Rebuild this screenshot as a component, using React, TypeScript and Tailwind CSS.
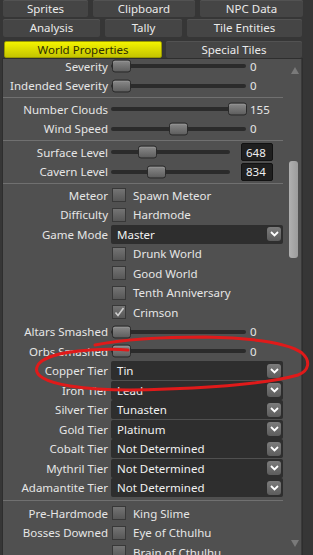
import React from "react";

const ROW = "flex items-center h-[19.5px] shrink-0";

function Label({ children }: { children?: React.ReactNode }) {
  return (
    <div className="w-[105px] shrink-0 text-right text-[#e6e6e6] whitespace-nowrap leading-none">
      {children}
    </div>
  );
}

function Thumb({ pos }: { pos: string }) {
  return (
    <div
      className={`absolute top-1/2 -translate-y-1/2 ${pos} w-[19px] h-[13px] rounded-[3px] border border-[#2a2a2a] bg-gradient-to-b from-[#8a8a8a] to-[#5e5e5e] shadow-[inset_0_1px_0_#9a9a9a]`}
    />
  );
}

function SliderRow({
  label,
  pos,
  value,
}: {
  label: string;
  pos: string;
  value: string;
}) {
  return (
    <div className={ROW}>
      <Label>{label}</Label>
      <div className="relative ml-[3px] w-[135px] h-full">
        <div className="absolute left-0 right-0 top-1/2 -translate-y-1/2 h-[4px] rounded-full bg-[#2b2b2b]" />
        <Thumb pos={pos} />
      </div>
      <div className="ml-[4px] text-[#e6e6e6] leading-none">{value}</div>
    </div>
  );
}

function LevelRow({
  label,
  pos,
  value,
}: {
  label: string;
  pos: string;
  value: string;
}) {
  return (
    <div className={ROW}>
      <Label>{label}</Label>
      <div className="relative ml-[3px] w-[119px] h-full">
        <div className="absolute left-0 right-0 top-1/2 -translate-y-1/2 h-[4px] rounded-full bg-[#2b2b2b]" />
        <Thumb pos={pos} />
      </div>
      <div className="ml-[11px] w-[32px] h-[18px] bg-[#1f1f1f] border border-[#121212] rounded-[2px] flex items-center pl-[4px] text-[#f0f0f0] leading-none">
        {value}
      </div>
    </div>
  );
}

function Box({ checked }: { checked?: boolean }) {
  return (
    <div className="ml-[4px] w-[14px] h-[14px] border border-[#383838] bg-gradient-to-b from-[#747474] to-[#575757] flex items-center justify-center shrink-0">
      {checked && (
        <svg width="11" height="10" viewBox="0 0 11 10">
          <path d="M1.5 5.5 L4 8.5 L9.5 1" fill="none" stroke="#cfcfcf" strokeWidth="1.6" />
        </svg>
      )}
    </div>
  );
}

function CheckRow({
  label,
  text,
  checked,
}: {
  label?: string;
  text: string;
  checked?: boolean;
}) {
  return (
    <div className={ROW}>
      <Label>{label}</Label>
      <Box checked={checked} />
      <div className="ml-[7px] text-[#e6e6e6] leading-none whitespace-nowrap">{text}</div>
    </div>
  );
}

function Select({ label, value }: { label: string; value: string }) {
  return (
    <div className={ROW}>
      <Label>{label}</Label>
      <div className="ml-[3px] w-[172px] h-[19px] bg-[#2e2e2e] rounded-[2px] flex items-center pl-[6px] pr-[2px]">
        <div className="flex-1 text-[#f2f2f2] leading-none whitespace-nowrap">{value}</div>
        <div className="w-[14px] h-[14px] rounded-[3px] bg-gradient-to-b from-[#7c7c7c] to-[#5c5c5c] flex items-center justify-center">
          <svg width="9" height="6" viewBox="0 0 9 6">
            <path d="M1 1 L4.5 4.5 L8 1" fill="none" stroke="#ffffff" strokeWidth="1.8" />
          </svg>
        </div>
      </div>
    </div>
  );
}

function Sep({ h }: { h: string }) {
  return (
    <div className={`flex items-center ${h} shrink-0`}>
      <div className="w-[280px] h-[1px] bg-[#707070]" />
    </div>
  );
}

function Tab({
  w,
  children,
  active,
  h,
}: {
  w: string;
  children: React.ReactNode;
  active?: boolean;
  h: string;
}) {
  return (
    <div
      className={`${w} ${h} shrink-0 rounded-[2px] flex items-center justify-center leading-none whitespace-nowrap ${
        active
          ? "bg-gradient-to-b from-[#f4f400] to-[#c4c400] text-[#2e2e00] border border-[#9a9a00]"
          : "bg-[#454545] text-[#eaeaea] shadow-[inset_0_1px_0_#525252]"
      }`}
    >
      {children}
    </div>
  );
}

export default function App() {
  return (
    <div className="relative w-[313px] h-[555px] overflow-hidden bg-[#363636] text-[11.5px] font-['Noto_Sans','Open_Sans',sans-serif]">
      {/* tabs */}
      <div className="flex flex-col">
        <div className="flex pl-[3px] gap-[5px] h-[17px] items-end">
          <Tab w="w-[85px]" h="h-[17px]">Sprites</Tab>
          <Tab w="w-[102px]" h="h-[17px]">Clipboard</Tab>
          <Tab w="w-[103px]" h="h-[17px]">NPC Data</Tab>
        </div>
        <div className="flex pl-[3px] gap-[5px] mt-[2px] h-[18px]">
          <Tab w="w-[97px]" h="h-[18px]">Analysis</Tab>
          <Tab w="w-[77px]" h="h-[18px]">Tally</Tab>
          <Tab w="w-[115px]" h="h-[18px]">Tile Entities</Tab>
        </div>
        <div className="flex pl-[4px] gap-[4px] mt-[4px] h-[17px]">
          <Tab w="w-[158px]" h="h-[17px]" active>
            World Properties
          </Tab>
          <Tab w="w-[136px]" h="h-[17px]">Special Tiles</Tab>
        </div>
      </div>

      {/* panel */}
      <div className="absolute left-[2px] top-[58px] w-[301px] h-[500px] border border-[#2e2e2e] bg-[#505050] flex overflow-hidden">
        <div className="flex-1 flex flex-col -mt-[2.5px]">
          <SliderRow label="Severity" pos="left-[1px]" value="0" />
          <SliderRow label="Indended Severity" pos="left-[1px]" value="0" />
          <Sep h="h-[4px]" />
          <SliderRow label="Number Clouds" pos="left-[117px]" value="155" />
          <SliderRow label="Wind Speed" pos="left-[58px]" value="0" />
          <Sep h="h-[4px]" />
          <LevelRow label="Surface Level" pos="left-[27px]" value="648" />
          <LevelRow label="Cavern Level" pos="left-[36px]" value="834" />
          <Sep h="h-[4px]" />
          <CheckRow label="Meteor" text="Spawn Meteor" />
          <CheckRow label="Difficulty" text="Hardmode" />
          <Select label="Game Mode" value="Master" />
          <CheckRow text="Drunk World" />
          <CheckRow text="Good World" />
          <CheckRow text="Tenth Anniversary" />
          <CheckRow text="Crimson" checked />
          <SliderRow label="Altars Smashed" pos="left-[1px]" value="0" />
          <SliderRow label="Orbs Smashed" pos="left-[1px]" value="0" />
          <Select label="Copper Tier" value="Tin" />
          <Select label="Iron Tier" value="Lead" />
          <Select label="Silver Tier" value="Tunasten" />
          <Select label="Gold Tier" value="Platinum" />
          <Select label="Cobalt Tier" value="Not Determined" />
          <Select label="Mythril Tier" value="Not Determined" />
          <Select label="Adamantite Tier" value="Not Determined" />
          <Sep h="h-[6px]" />
          <CheckRow label="Pre-Hardmode" text="King Slime" />
          <CheckRow label="Bosses Downed" text="Eye of Cthulhu" />
          <CheckRow text="Brain of Cthulhu" />
        </div>
        {/* scrollbar */}
        <div className="w-[15px] shrink-0 flex flex-col items-start pl-[2px] border-r border-[#3a3a3a]">
          <svg className="mt-[8px] ml-[2px]" width="8" height="7" viewBox="0 0 8 7">
            <path d="M4 0 L8 7 L0 7 Z" fill="#7a7a7a" />
          </svg>
          <div className="mt-[87px] w-[9px] h-[97px] rounded-[3px] bg-gradient-to-r from-[#b0b0b0] to-[#9c9c9c]" />
          <svg className="mt-[282px] ml-[2px]" width="8" height="7" viewBox="0 0 8 7">
            <path d="M0 0 L8 0 L4 7 Z" fill="#7a7a7a" />
          </svg>
        </div>
      </div>

      {/* red annotation */}
      <svg
        className="absolute left-0 top-0 pointer-events-none"
        width="313"
        height="555"
        viewBox="0 0 313 555"
      >
        <path
          d="M95 345 C120 340 160 337 205 337 C250 338 288 342 302 353 C311 361 309 371 298 375 C270 383 220 387 167 389 C130 391 95 390 70 386 C45 382 34 375 37 367 C40 358 60 352 90 350 C105 349 118 349 128 350"
          fill="none"
          stroke="#e01a1a"
          strokeWidth="3"
          strokeLinecap="round"
        />
      </svg>
    </div>
  );
}
